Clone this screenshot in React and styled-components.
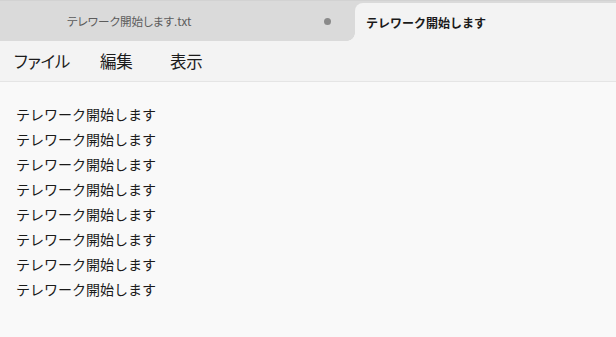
import React from 'react'
import styled, { createGlobalStyle } from 'styled-components'

const GlobalStyle = createGlobalStyle`
  html, body {
    margin: 0;
    padding: 0;
    background: #f9f9f9;
  }
  body {
    font-family: "Noto Sans CJK JP", "Noto Sans", sans-serif;
    color: #1b1b1b;
  }
`

const Window = styled.div`
  width: 616px;
  height: 337px;
  display: flex;
  flex-direction: column;
  background: #f9f9f9;
  overflow: hidden;
`

const TabBar = styled.div`
  display: flex;
  height: 41px;
  background: #dadada;
  border-top: 1px solid #d2d2d2;
  box-sizing: border-box;
`

const Tab = styled.div`
  position: relative;
  display: flex;
  align-items: center;
  box-sizing: border-box;
  ${p => p.$active ? `
    flex: 1;
    margin-top: 2px;
    padding-left: 11px;
    background: #f3f3f3;
    border-top-left-radius: 8px;
    color: #1a1a1a;
    font-size: 12px;
    font-weight: 700;
    &::before {
      content: "";
      position: absolute;
      left: -8px;
      bottom: 0;
      width: 8px;
      height: 8px;
      background: radial-gradient(circle at 0 0, transparent 7.5px, #f3f3f3 8px);
    }
  ` : `
    flex: 0 0 355px;
    padding-left: 67px;
    padding-right: 24px;
    color: #5c5c5c;
    font-size: 11.6px;
    font-feature-settings: "palt";
  `}
`

const TabTitle = styled.span`
  flex: 1;
`

const Dot = styled.span`
  width: 7px;
  height: 7px;
  border-radius: 50%;
  background: #8a8a8a;
`

const MenuBar = styled.div`
  display: flex;
  align-items: center;
  height: 40px;
  padding-left: 14px;
  background: #f3f3f3;
  border-bottom: 1px solid #e5e5e5;
`

const MenuItem = styled.span`
  font-size: 16.5px;
  font-feature-settings: "palt";
  letter-spacing: -0.3px;
  color: #1b1b1b;
  width: ${p => p.$w}px;
`

const Editor = styled.div`
  flex: 1;
  padding: 20px 16px 0;
  font-size: 14px;
  line-height: 25px;
  color: #1a1a1a;
`

const Line = styled.div``

const lines = Array.from({ length: 8 }, () => 'テレワーク開始します')

export default function App() {
  return (
    <Window>
      <GlobalStyle />
      <TabBar>
        <Tab>
          <TabTitle>テレワーク開始します.txt</TabTitle>
          <Dot />
        </Tab>
        <Tab $active>テレワーク開始します</Tab>
      </TabBar>
      <MenuBar>
        <MenuItem $w={86}>ファイル</MenuItem>
        <MenuItem $w={70}>編集</MenuItem>
        <MenuItem $w={60}>表示</MenuItem>
      </MenuBar>
      <Editor>
        {lines.map((t, i) => <Line key={i}>{t}</Line>)}
      </Editor>
    </Window>
  )
}
